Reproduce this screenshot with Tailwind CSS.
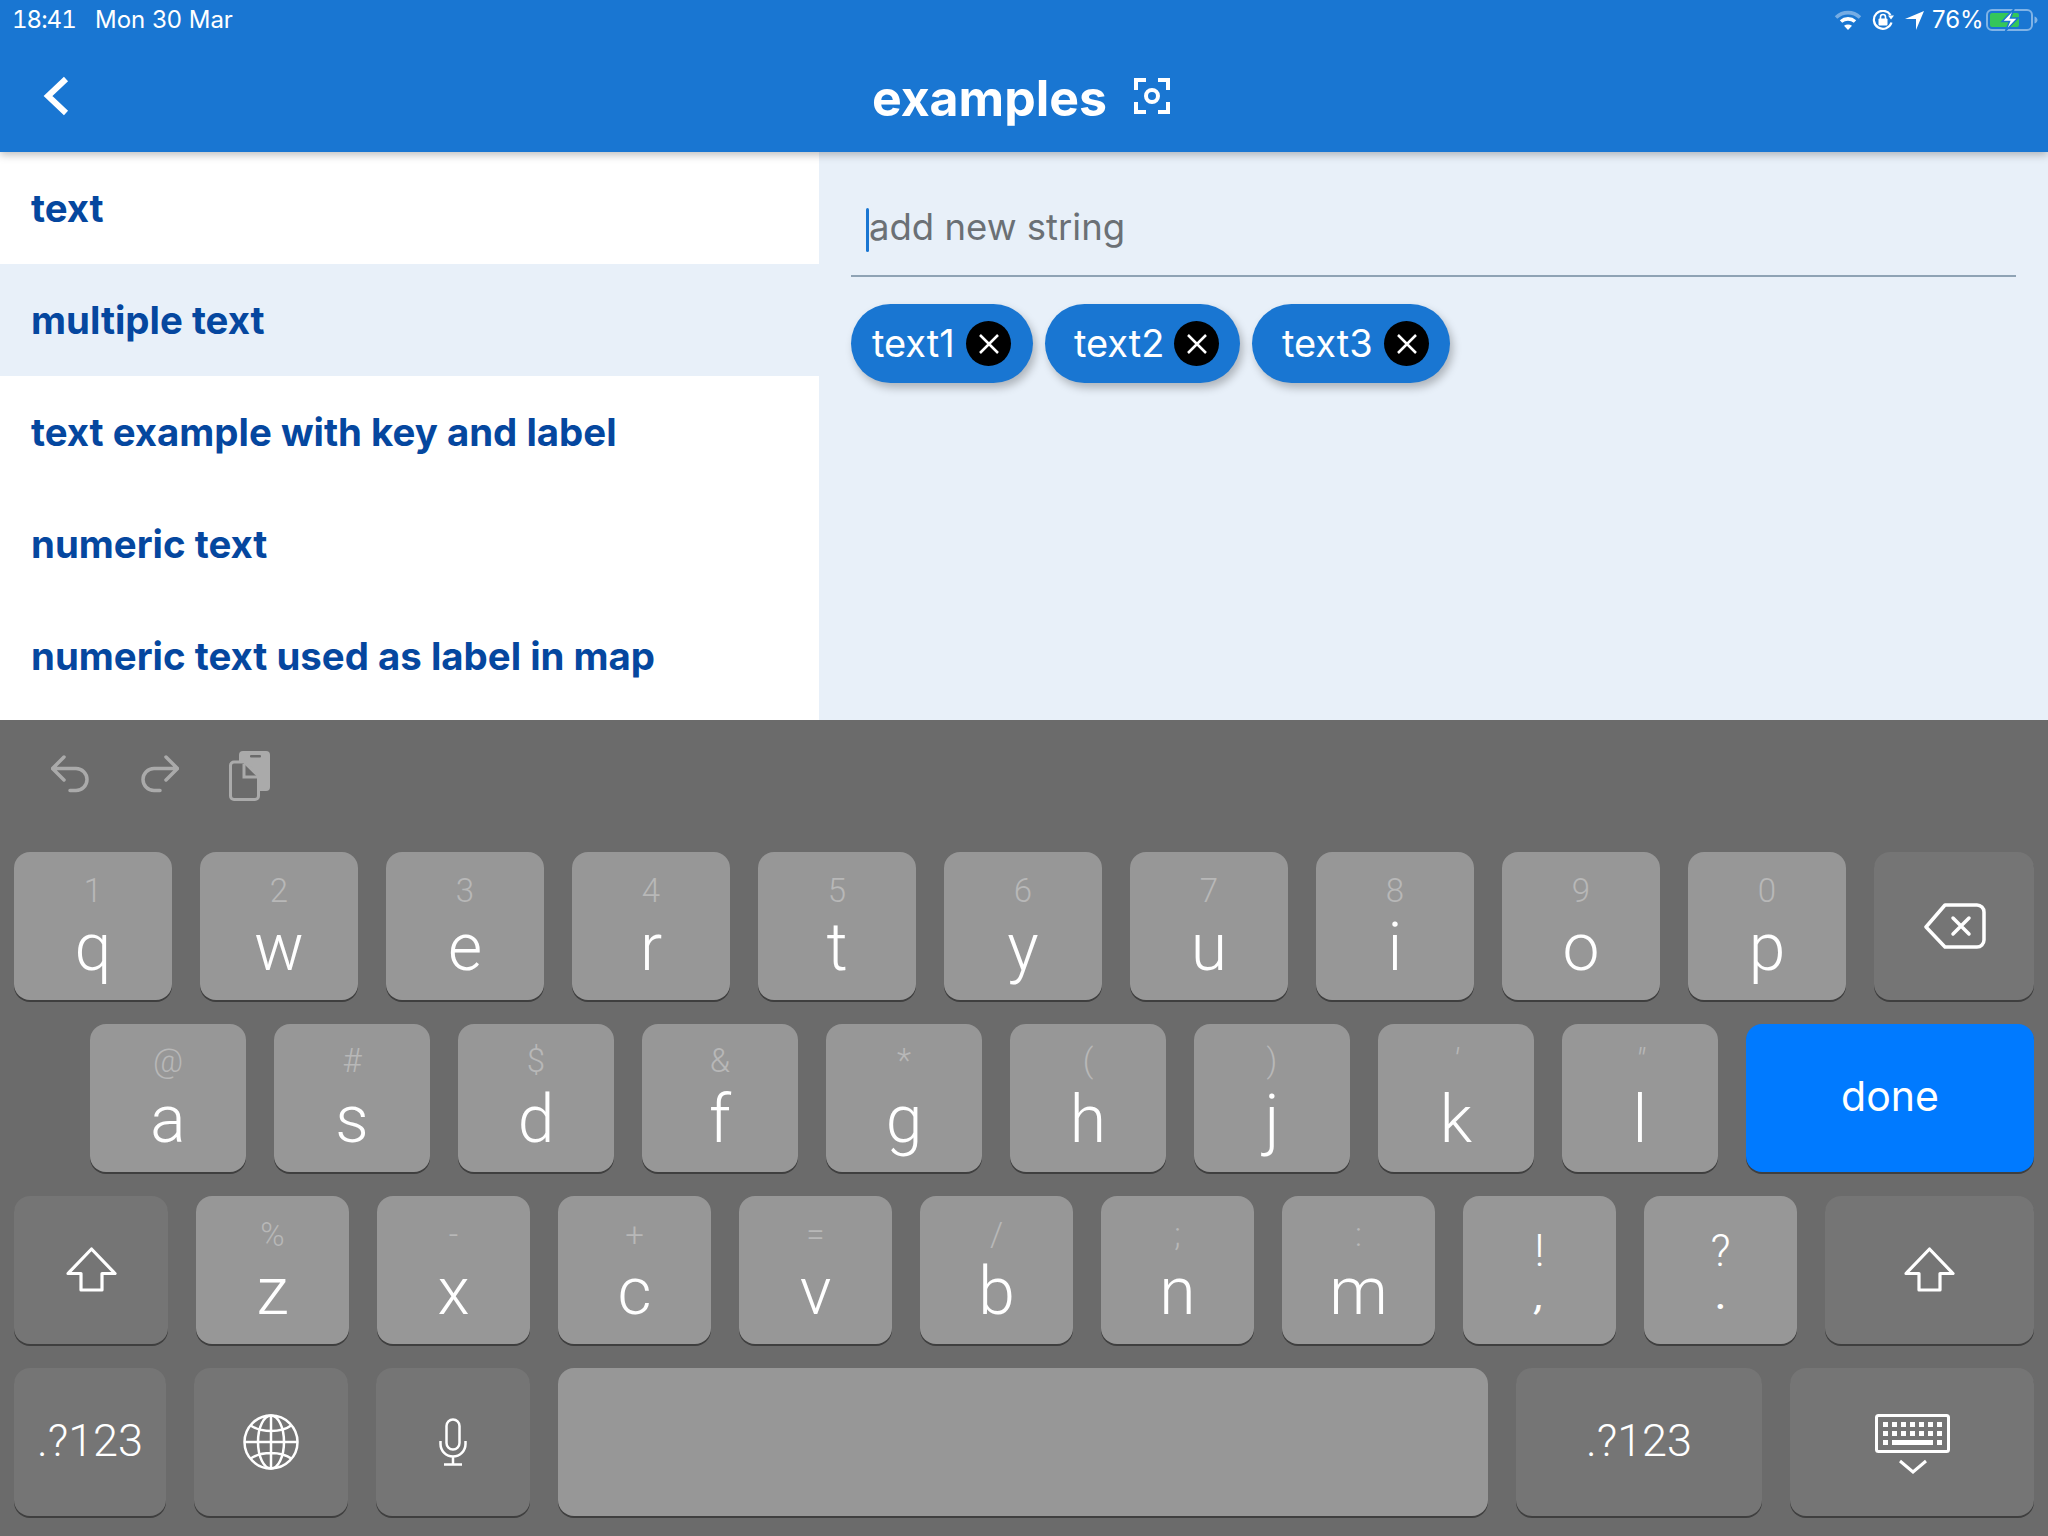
<!DOCTYPE html>
<html lang="en">
<head>
<meta charset="utf-8">
<title>examples</title>
<script src="https://cdn.jsdelivr.net/npm/@tailwindcss/browser@4"></script>
</head>
<body class="w-[2048px] h-[1536px] overflow-hidden font-[Inter,sans-serif] bg-white flex flex-col">

<!-- app bar -->
<header class="relative z-10 h-[152px] shrink-0 bg-[#1976d2] text-white shadow-[0_3px_8px_rgba(0,0,0,0.25)]">
  <div class="h-[40px] flex items-center pl-[12px] pr-[10px] text-[24px]">
    <span class="w-[63px] tabular-nums tracking-[-1px]">18:41</span>
    <span class="ml-[20px]">Mon 30 Mar</span>
    <div class="ml-auto flex items-center">
      <svg width="28" height="20" viewBox="0 0 28 20" fill="none" stroke="white" stroke-width="3.6">
        <path d="M2 7.5C9 1 19 1 26 7.5" stroke-opacity="0.4"/>
        <path d="M7 11.5C11 8 17 8 21 11.5"/>
        <path d="M14 20l-4-4.2c2.3-1.6 5.7-1.6 8 0z" fill="white" stroke="none"/>
      </svg>
      <svg class="ml-[10px]" width="23" height="20" viewBox="0 0 23 20" fill="none">
        <path d="M19.5 12.5A9 9 0 1 1 18.5 5" stroke="white" stroke-width="2.2"/>
        <path d="M16 5.5h6l-3 4z" fill="white"/>
        <rect x="6.5" y="8.5" width="9" height="7" rx="1" fill="white"/>
        <path d="M8.5 9V7a2.5 2.5 0 0 1 5 0v2" stroke="white" stroke-width="1.6"/>
      </svg>
      <svg class="ml-[10px]" width="19" height="19" viewBox="0 0 19 19"><path d="M19 0L11 19V8H0z" fill="white"/></svg>
      <span class="ml-[8px] w-[51px]">76%</span>
      <svg class="ml-[3px]" width="52" height="22" viewBox="0 0 52 22" fill="none">
        <rect x="1" y="1" width="45" height="20" rx="5" stroke="white" stroke-opacity="0.45" stroke-width="2"/>
        <rect x="4" y="4" width="29" height="14" rx="2" fill="#34c759"/>
        <path d="M48.5 7.5c2 .6 3 2 3 3.5s-1 2.900-3 3.500z" fill="white" fill-opacity="0.45"/>
        <path d="M28 0L16 12.500h7.500L19.500 22 32 9h-7.500z" fill="white" stroke="#1976d2" stroke-width="1.500"/>
      </svg>
    </div>
  </div>
  <div class="h-[112px] flex items-center">
    <div class="flex-1">
      <svg class="block ml-[43px]" width="27" height="40" viewBox="0 0 27 40" fill="none"><path d="M23 3L5 20l18 17" stroke="white" stroke-width="6"/></svg>
    </div>
    <div class="flex items-center mt-[3px] -translate-x-[3px]">
      <span class="text-[50px] leading-[56px] font-bold">examples</span>
      <svg class="ml-[27px] -mt-[4px]" width="36" height="36" viewBox="0 0 36 36" fill="none" stroke="white" stroke-width="4">
        <path d="M12 2H2v10M24 2h10v10M12 34H2V24M24 34h10V24"/>
        <circle cx="18" cy="18" r="6"/>
      </svg>
    </div>
    <div class="flex-1"></div>
  </div>
</header>

<!-- content -->
<main class="h-[568px] shrink-0 flex">
  <nav class="w-[819px] bg-white flex flex-col text-[#05479f] text-[38.400px] font-bold">
    <div class="h-[112px] flex items-center pl-[31px] pt-[2px]">text</div>
    <div class="h-[112px] flex items-center pl-[31px] pt-[2px] bg-[#e8f0f9]">multiple text</div>
    <div class="h-[112px] flex items-center pl-[31px] pt-[2px]">text example with key and label</div>
    <div class="h-[112px] flex items-center pl-[31px] pt-[2px]">numeric text</div>
    <div class="h-[112px] flex items-center pl-[31px] pt-[2px]">numeric text used as label in map</div>
  </nav>
  <section class="flex-1 bg-[#e8f0f9] pl-[32px] pr-[32px]">
    <div class="h-[125px] flex items-center border-b-2 border-[#8fa3b5] pt-[33px] pl-[15px]">
      <span class="w-[3px] h-[44px] shrink-0 rounded-full bg-[#1976d2]"></span>
      <span class="text-[36.500px] text-[#6b7075] -translate-y-[3px]">add new string</span>
    </div>
    <div class="flex gap-[12px] mt-[27px]">
      <div class="h-[79px] w-[182px] rounded-full bg-[#1976d2] text-white text-[38px] flex items-center justify-between pl-[21px] pr-[22px] shadow-[3px_5px_8px_rgba(0,0,0,0.25)]">
        <span>text1</span>
        <span class="w-[45px] h-[45px] rounded-full bg-black flex items-center justify-center"><svg width="20" height="20" viewBox="0 0 20 20" stroke="white" stroke-width="2.500"><path d="M1 1l18 18M19 1L1 19"/></svg></span>
      </div>
      <div class="h-[79px] w-[195px] rounded-full bg-[#1976d2] text-white text-[38px] flex items-center justify-between pl-[29px] pr-[21px] shadow-[3px_5px_8px_rgba(0,0,0,0.25)]">
        <span>text2</span>
        <span class="w-[45px] h-[45px] rounded-full bg-black flex items-center justify-center"><svg width="20" height="20" viewBox="0 0 20 20" stroke="white" stroke-width="2.500"><path d="M1 1l18 18M19 1L1 19"/></svg></span>
      </div>
      <div class="h-[79px] w-[198px] rounded-full bg-[#1976d2] text-white text-[38px] flex items-center justify-between pl-[30px] pr-[21px] shadow-[3px_5px_8px_rgba(0,0,0,0.25)]">
        <span>text3</span>
        <span class="w-[45px] h-[45px] rounded-full bg-black flex items-center justify-center"><svg width="20" height="20" viewBox="0 0 20 20" stroke="white" stroke-width="2.500"><path d="M1 1l18 18M19 1L1 19"/></svg></span>
      </div>
    </div>
  </section>
</main>

<!-- keyboard -->
<div class="flex-1 bg-[#6b6b6b] font-[Roboto,sans-serif] font-light text-white px-[14px]">
  <div class="h-[132px] relative">
    <svg class="absolute left-[37px] top-[35px]" width="38" height="38" viewBox="0 0 38 38" fill="none" stroke="#aaaaaa" stroke-width="3.500">
      <path d="M13 2L1.500 13.500 13 25M1.500 13.500H25a11 11 0 0 1 0 22h-6" stroke-linecap="round" stroke-linejoin="round"/>
    </svg>
    <svg class="absolute left-[127px] top-[35px]" width="38" height="38" viewBox="0 0 38 38" fill="none" stroke="#aaaaaa" stroke-width="3.500">
      <path d="M25 2l11.500 11.500L25 25M36.500 13.500H13a11 11 0 0 0 0 22h6" stroke-linecap="round" stroke-linejoin="round"/>
    </svg>
    <svg class="absolute left-[215px] top-[31px]" width="41" height="50" viewBox="0 0 41 50">
      <rect x="10" y="0" width="31" height="40" rx="4" fill="#aaaaaa"/>
      <rect x="21" y="4" width="11" height="2.500" rx="1" fill="#6b6b6b"/>
      <path d="M15 11H5a3.500 3.500 0 0 0-3.500 3.500V45A3.500 3.500 0 0 0 5 48.500h21a3.500 3.500 0 0 0 3.500-3.500V25z" fill="#6b6b6b" stroke="#aaaaaa" stroke-width="3"/>
      <path d="M15 13v13h14" fill="none" stroke="#aaaaaa" stroke-width="3"/>
    </svg>
  </div>

  <div class="flex gap-[28px] h-[148px]">
    <div class="w-[158px] rounded-[16px] bg-[#979797] shadow-[0_2px_0_#3f3f3f] flex flex-col items-center"><span class="mt-[19px] h-[40px] text-[33px] leading-[40px] text-[#b8b8b8]">1</span><span class="mt-[5px] text-[66px] leading-[64px]">q</span></div>
    <div class="w-[158px] rounded-[16px] bg-[#979797] shadow-[0_2px_0_#3f3f3f] flex flex-col items-center"><span class="mt-[19px] h-[40px] text-[33px] leading-[40px] text-[#b8b8b8]">2</span><span class="mt-[5px] text-[66px] leading-[64px]">w</span></div>
    <div class="w-[158px] rounded-[16px] bg-[#979797] shadow-[0_2px_0_#3f3f3f] flex flex-col items-center"><span class="mt-[19px] h-[40px] text-[33px] leading-[40px] text-[#b8b8b8]">3</span><span class="mt-[5px] text-[66px] leading-[64px]">e</span></div>
    <div class="w-[158px] rounded-[16px] bg-[#979797] shadow-[0_2px_0_#3f3f3f] flex flex-col items-center"><span class="mt-[19px] h-[40px] text-[33px] leading-[40px] text-[#b8b8b8]">4</span><span class="mt-[5px] text-[66px] leading-[64px]">r</span></div>
    <div class="w-[158px] rounded-[16px] bg-[#979797] shadow-[0_2px_0_#3f3f3f] flex flex-col items-center"><span class="mt-[19px] h-[40px] text-[33px] leading-[40px] text-[#b8b8b8]">5</span><span class="mt-[5px] text-[66px] leading-[64px]">t</span></div>
    <div class="w-[158px] rounded-[16px] bg-[#979797] shadow-[0_2px_0_#3f3f3f] flex flex-col items-center"><span class="mt-[19px] h-[40px] text-[33px] leading-[40px] text-[#b8b8b8]">6</span><span class="mt-[5px] text-[66px] leading-[64px]">y</span></div>
    <div class="w-[158px] rounded-[16px] bg-[#979797] shadow-[0_2px_0_#3f3f3f] flex flex-col items-center"><span class="mt-[19px] h-[40px] text-[33px] leading-[40px] text-[#b8b8b8]">7</span><span class="mt-[5px] text-[66px] leading-[64px]">u</span></div>
    <div class="w-[158px] rounded-[16px] bg-[#979797] shadow-[0_2px_0_#3f3f3f] flex flex-col items-center"><span class="mt-[19px] h-[40px] text-[33px] leading-[40px] text-[#b8b8b8]">8</span><span class="mt-[5px] text-[66px] leading-[64px]">i</span></div>
    <div class="w-[158px] rounded-[16px] bg-[#979797] shadow-[0_2px_0_#3f3f3f] flex flex-col items-center"><span class="mt-[19px] h-[40px] text-[33px] leading-[40px] text-[#b8b8b8]">9</span><span class="mt-[5px] text-[66px] leading-[64px]">o</span></div>
    <div class="w-[158px] rounded-[16px] bg-[#979797] shadow-[0_2px_0_#3f3f3f] flex flex-col items-center"><span class="mt-[19px] h-[40px] text-[33px] leading-[40px] text-[#b8b8b8]">0</span><span class="mt-[5px] text-[66px] leading-[64px]">p</span></div>
    <div class="flex-1 rounded-[16px] bg-[#757575] shadow-[0_2px_0_#3f3f3f] flex items-center justify-center">
      <svg class="ml-[2px]" width="62" height="46" viewBox="0 0 62 46" fill="none" stroke="white" stroke-width="3.500" stroke-linejoin="round" stroke-linecap="round">
        <path d="M21 2H53a7 7 0 0 1 7 7V37a7 7 0 0 1-7 7H21L2 24z"/>
        <path d="M29 15l16 16M45 15L29 31"/>
      </svg>
    </div>
  </div>

  <div class="flex gap-[28px] h-[148px] mt-[24px] pl-[76px]">
    <div class="w-[156px] rounded-[16px] bg-[#979797] shadow-[0_2px_0_#3f3f3f] flex flex-col items-center"><span class="mt-[17px] h-[42px] text-[33px] leading-[40px] text-[#b8b8b8]">@</span><span class="mt-[5px] text-[66px] leading-[64px]">a</span></div>
    <div class="w-[156px] rounded-[16px] bg-[#979797] shadow-[0_2px_0_#3f3f3f] flex flex-col items-center"><span class="mt-[17px] h-[42px] text-[33px] leading-[40px] text-[#b8b8b8]">#</span><span class="mt-[5px] text-[66px] leading-[64px]">s</span></div>
    <div class="w-[156px] rounded-[16px] bg-[#979797] shadow-[0_2px_0_#3f3f3f] flex flex-col items-center"><span class="mt-[17px] h-[42px] text-[33px] leading-[40px] text-[#b8b8b8]">$</span><span class="mt-[5px] text-[66px] leading-[64px]">d</span></div>
    <div class="w-[156px] rounded-[16px] bg-[#979797] shadow-[0_2px_0_#3f3f3f] flex flex-col items-center"><span class="mt-[17px] h-[42px] text-[33px] leading-[40px] text-[#b8b8b8]">&amp;</span><span class="mt-[5px] text-[66px] leading-[64px]">f</span></div>
    <div class="w-[156px] rounded-[16px] bg-[#979797] shadow-[0_2px_0_#3f3f3f] flex flex-col items-center"><span class="mt-[17px] h-[42px] text-[33px] leading-[40px] text-[#b8b8b8]">*</span><span class="mt-[5px] text-[66px] leading-[64px]">g</span></div>
    <div class="w-[156px] rounded-[16px] bg-[#979797] shadow-[0_2px_0_#3f3f3f] flex flex-col items-center"><span class="mt-[17px] h-[42px] text-[33px] leading-[40px] text-[#b8b8b8]">(</span><span class="mt-[5px] text-[66px] leading-[64px]">h</span></div>
    <div class="w-[156px] rounded-[16px] bg-[#979797] shadow-[0_2px_0_#3f3f3f] flex flex-col items-center"><span class="mt-[17px] h-[42px] text-[33px] leading-[40px] text-[#b8b8b8]">)</span><span class="mt-[5px] text-[66px] leading-[64px]">j</span></div>
    <div class="w-[156px] rounded-[16px] bg-[#979797] shadow-[0_2px_0_#3f3f3f] flex flex-col items-center"><span class="mt-[17px] h-[42px] text-[33px] leading-[40px] text-[#b8b8b8] italic">′</span><span class="mt-[5px] text-[66px] leading-[64px]">k</span></div>
    <div class="w-[156px] rounded-[16px] bg-[#979797] shadow-[0_2px_0_#3f3f3f] flex flex-col items-center"><span class="mt-[17px] h-[42px] text-[33px] leading-[40px] text-[#b8b8b8] italic">″</span><span class="mt-[5px] text-[66px] leading-[64px]">l</span></div>
    <div class="flex-1 rounded-[16px] bg-[#007aff] shadow-[0_2px_0_#3f3f3f] flex items-center justify-center pb-[2px] text-[41px] font-normal font-[Inter,sans-serif]">done</div>
  </div>

  <div class="flex gap-[28px] h-[148px] mt-[24px]">
    <div class="w-[154px] rounded-[16px] bg-[#757575] shadow-[0_2px_0_#3f3f3f] flex items-center justify-center">
      <svg class="-mt-[2px]" width="51" height="45" viewBox="0 0 51 45" fill="none" stroke="white" stroke-width="3.200" stroke-linejoin="round"><path d="M25.500 2L49 26.500H36V43H15V26.500H2z"/></svg>
    </div>
    <div class="w-[153px] rounded-[16px] bg-[#979797] shadow-[0_2px_0_#3f3f3f] flex flex-col items-center"><span class="mt-[19px] h-[40px] text-[33px] leading-[40px] text-[#b8b8b8]">%</span><span class="mt-[5px] text-[66px] leading-[64px]">z</span></div>
    <div class="w-[153px] rounded-[16px] bg-[#979797] shadow-[0_2px_0_#3f3f3f] flex flex-col items-center"><span class="mt-[19px] h-[40px] text-[33px] leading-[40px] text-[#b8b8b8]">-</span><span class="mt-[5px] text-[66px] leading-[64px]">x</span></div>
    <div class="w-[153px] rounded-[16px] bg-[#979797] shadow-[0_2px_0_#3f3f3f] flex flex-col items-center"><span class="mt-[19px] h-[40px] text-[33px] leading-[40px] text-[#b8b8b8]">+</span><span class="mt-[5px] text-[66px] leading-[64px]">c</span></div>
    <div class="w-[153px] rounded-[16px] bg-[#979797] shadow-[0_2px_0_#3f3f3f] flex flex-col items-center"><span class="mt-[19px] h-[40px] text-[33px] leading-[40px] text-[#b8b8b8]">=</span><span class="mt-[5px] text-[66px] leading-[64px]">v</span></div>
    <div class="w-[153px] rounded-[16px] bg-[#979797] shadow-[0_2px_0_#3f3f3f] flex flex-col items-center"><span class="mt-[19px] h-[40px] text-[33px] leading-[40px] text-[#b8b8b8]">/</span><span class="mt-[5px] text-[66px] leading-[64px]">b</span></div>
    <div class="w-[153px] rounded-[16px] bg-[#979797] shadow-[0_2px_0_#3f3f3f] flex flex-col items-center"><span class="mt-[19px] h-[40px] text-[33px] leading-[40px] text-[#b8b8b8]">;</span><span class="mt-[5px] text-[66px] leading-[64px]">n</span></div>
    <div class="w-[153px] rounded-[16px] bg-[#979797] shadow-[0_2px_0_#3f3f3f] flex flex-col items-center"><span class="mt-[19px] h-[40px] text-[33px] leading-[40px] text-[#b8b8b8]">:</span><span class="mt-[5px] text-[66px] leading-[64px]">m</span></div>
    <div class="w-[153px] rounded-[16px] bg-[#979797] shadow-[0_2px_0_#3f3f3f] flex flex-col items-center"><span class="mt-[30px] h-[50px] text-[44px] leading-[50px]">!</span><span class="text-[34px] leading-[43px] font-bold italic">,</span></div>
    <div class="w-[153px] rounded-[16px] bg-[#979797] shadow-[0_2px_0_#3f3f3f] flex flex-col items-center"><span class="mt-[30px] h-[50px] text-[44px] leading-[50px]">?</span><span class="text-[34px] leading-[43px] font-bold">.</span></div>
    <div class="flex-1 rounded-[16px] bg-[#757575] shadow-[0_2px_0_#3f3f3f] flex items-center justify-center">
      <svg class="-mt-[2px]" width="51" height="45" viewBox="0 0 51 45" fill="none" stroke="white" stroke-width="3.200" stroke-linejoin="round"><path d="M25.500 2L49 26.500H36V43H15V26.500H2z"/></svg>
    </div>
  </div>

  <div class="flex gap-[28px] h-[148px] mt-[24px]">
    <div class="w-[152px] rounded-[16px] bg-[#757575] shadow-[0_2px_0_#3f3f3f] flex items-center justify-center pb-[2px] text-[45px]">.?123</div>
    <div class="w-[154px] rounded-[16px] bg-[#757575] shadow-[0_2px_0_#3f3f3f] flex items-center justify-center">
      <svg width="56" height="56" viewBox="0 0 56 56" fill="none" stroke="white" stroke-width="2.500">
        <circle cx="28" cy="28" r="26.500"/>
        <ellipse cx="28" cy="28" rx="13" ry="26.500"/>
        <path d="M28 1.500v53M1.500 28h53M7 11c11 8 31 8 42 0M7 45c11-8 31-8 42 0"/>
      </svg>
    </div>
    <div class="w-[154px] rounded-[16px] bg-[#757575] shadow-[0_2px_0_#3f3f3f] flex items-center justify-center">
      <svg width="28" height="48" viewBox="0 0 28 48" fill="none" stroke="white" stroke-width="2.500">
        <rect x="7.500" y="1.500" width="13" height="30" rx="6.500"/>
        <path d="M1.500 23v3a12.500 12.500 0 0 0 25 0v-3M14 38.500V46M5 46.500h18"/>
      </svg>
    </div>
    <div class="w-[930px] rounded-[16px] bg-[#979797] shadow-[0_2px_0_#3f3f3f]"></div>
    <div class="w-[246px] rounded-[16px] bg-[#757575] shadow-[0_2px_0_#3f3f3f] flex items-center justify-center pb-[2px] text-[45px]">.?123</div>
    <div class="flex-1 rounded-[16px] bg-[#757575] shadow-[0_2px_0_#3f3f3f] flex flex-col items-center pt-[46px]">
      <svg width="75" height="61" viewBox="0 0 75 61" fill="none">
        <rect x="1.500" y="1.500" width="72" height="36" rx="2" stroke="white" stroke-width="3"/>
        <path d="M8 8h5v5H8zM17 8h5v5h-5zM26 8h5v5h-5zM35 8h5v5h-5zM44 8h5v5h-5zM53 8h5v5h-5zM62 8h5v5h-5zM8 17h5v5H8zM17 17h5v5h-5zM26 17h5v5h-5zM35 17h5v5h-5zM44 17h5v5h-5zM53 17h5v5h-5zM62 17h5v5h-5zM8 26h5v5H8zM17 26h41v5H17zM62 26h5v5h-5z" fill="white"/>
        <path d="M25 47l13 11 13-11" stroke="white" stroke-width="3"/>
      </svg>
    </div>
  </div>
</div>

</body>
</html>
